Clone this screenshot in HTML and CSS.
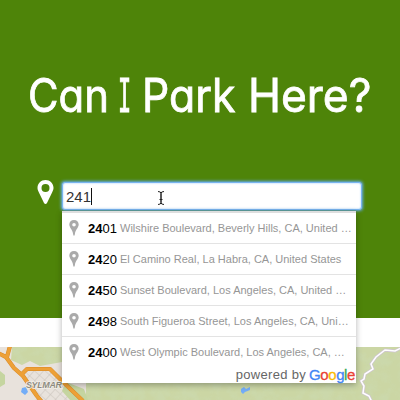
FILE: index.html
```html
<!DOCTYPE html>
<html lang="en">
<head>
<meta charset="utf-8">
<title>Can I Park Here?</title>
<link rel="stylesheet" href="styles.css">
</head>
<body>
<svg class="defs" width="0" height="0" aria-hidden="true">
  <symbol id="pin" viewBox="0 0 16 24">
    <path fill-rule="evenodd" d="M8 0C3.500 0 0 3.400 0 7.800c0 1.800.5 2.800 1.300 4.500L6.500 23q.6 1 1.500 1t1.500-1l5.200-10.700C15.500 10.600 16 9.600 16 7.800 16 3.400 12.500 0 8 0zM8 4a4 4 0 1 1 0 8 4 4 0 0 1 0-8z"/>
  </symbol>
  <symbol id="marker" viewBox="0 0 10 16">
    <path fill-rule="evenodd" d="M5 0C2.200 0 .3 2 .3 4.600c0 3 3.200 5 3.800 9.400.1.800.3 1.700.9 1.700s.8-.9.900-1.700C6.500 9.600 9.700 7.600 9.700 4.600 9.700 2 7.800 0 5 0zM5 3a1.800 1.800 0 1 1 0 3.600A1.800 1.800 0 0 1 5 3z"/>
  </symbol>
</svg>
<header class="hero">
  <h1 class="title"><span class="can">Can</span> <span class="i">I</span> <span class="park">Park</span> <span class="here">Here?</span></h1>
  <div class="search">
    <svg class="pin"><use href="#pin"/></svg>
    <div class="field"><span class="value">241</span><span class="caret"></span>
      <svg class="cursor" viewBox="0 0 8 16"><path d="M1 1.500q3 0 3 2v9q0 2-3 2M7 1.500q-3 0-3 2v9q0 2 3 2M2.500 9.500h3"/></svg>
      <div class="menu">
        <div class="row"><svg class="marker"><use href="#marker"/></svg><span class="num"><b>24</b>01</span><span class="place">Wilshire Boulevard, Beverly Hills, CA, United …</span></div>
        <div class="row"><svg class="marker"><use href="#marker"/></svg><span class="num"><b>24</b>20</span><span class="place">El Camino Real, La Habra, CA, United States</span></div>
        <div class="row"><svg class="marker"><use href="#marker"/></svg><span class="num"><b>24</b>50</span><span class="place">Sunset Boulevard, Los Angeles, CA, United …</span></div>
        <div class="row"><svg class="marker"><use href="#marker"/></svg><span class="num"><b>24</b>98</span><span class="place">South Figueroa Street, Los Angeles, CA, Uni…</span></div>
        <div class="row"><svg class="marker"><use href="#marker"/></svg><span class="num"><b>24</b>00</span><span class="place">West Olympic Boulevard, Los Angeles, CA, …</span></div>
        <div class="credit"><span>powered by</span><span class="google"><i class="blue">G</i><i class="red">o</i><i class="yellow">o</i><i class="blue">g</i><i class="green">l</i><i class="red">e</i></span></div>
      </div>
    </div>
  </div>
</header>
<svg class="map" viewBox="0 347 400 53">
  <defs>
    <filter id="relief" x="0" y="0" width="100%" height="100%">
      <feTurbulence type="fractalNoise" baseFrequency=".09" numOctaves="3" seed="8"/>
      <feColorMatrix values="0 0 0 0 .6  0 0 0 0 .7  0 0 0 0 .43  2.500 0 0 0 -.9"/>
    </filter>
    <pattern id="streets" width="7" height="7" patternUnits="userSpaceOnUse" patternTransform="rotate(42)">
      <path d="M0 0H7M0 0V7" stroke="#cbc5be" stroke-width="1.200"/>
    </pattern>
  </defs>
  <rect y="347" width="400" height="53" fill="#cbd6a4"/>
  <rect y="347" width="400" height="53" filter="url(#relief)" opacity=".65"/>
  <path fill="#e8e2dc" d="M0 347h12l-1 13 11 5 8-4 10 5 22-4 24 18v20H0z"/>
  <path fill="url(#streets)" d="M28 370l22-2 16 12 16 20H36L24 378z"/>
  <path fill="#c5d5a0" d="M0 371l5 4v9l-5 3zM66 382l18 7 4 11H70l-8-9z"/>
  <path fill="none" stroke="#d98925" stroke-width="4.200" stroke-linejoin="round" d="M-2 353l8 4 8 11 9 8 14 20 5 6M7 357l3-11M22 374l5-5h23l11 11 22 21"/>
  <path fill="none" stroke="#eda037" stroke-width="3.200" stroke-linejoin="round" d="M-2 353l8 4 8 11 9 8 14 20 5 6M7 357l3-11M22 374l5-5h23l11 11 22 21"/>
  <path fill="#73adf7" d="M22 388l4-1 2 5-3 3-4-3zM241 389l3-2 2 2 4-2v3l-5 2-2 2-2-2z"/>
  <path fill="none" stroke="#cfc4d4" stroke-width="2.800" d="M401 348l-6 3-10-1-9 7-5 7 2 5-8 5-1 5-3 2 3 5-1 7 6 3 4 8"/>
  <path fill="none" stroke="#fff" stroke-width="1.500" d="M401 348l-6 3-10-1-9 7-5 7 2 5-8 5-1 5-3 2 3 5-1 7 6 3 4 8"/>
  <text class="town" x="26" y="387.500" textLength="36">SYLMAR</text>
</svg>
</body>
</html>
```
FILE: styles.css
```css
* { box-sizing: border-box; }
body { margin: 0; width: 400px; height: 400px; overflow: hidden; background: #fff; font-family: "Liberation Sans", Arial, sans-serif; }
.defs { position: absolute; }
.hero { height: 318px; padding-top: 67px; background: #4e8409; }
.title { display: flex; height: 56px; margin: 0; padding-left: 28px; color: #fff; font: 400 46px/56px Inter, sans-serif; font-feature-settings: "cv11", "cv08"; -webkit-text-stroke: .8px #fff; stroke-linejoin: round; white-space: nowrap; }
.title span { flex: none; transform-origin: 0 50%; }
.can { width: 91px; transform: scaleX(.91); }
.i { width: 23px; transform: scaleX(.55); }
.park { width: 106px; transform: scaleX(.93); }
.here { width: 122px; transform: scaleX(.965); }
.search { display: flex; margin-top: 59px; padding-left: 37px; }
.pin { width: 17px; height: 24px; margin: -2px 8px 0 0; fill: #fff; }
.field { position: relative; display: flex; align-items: center; width: 300px; height: 28px; padding-left: 3px; background: #fff; border: 1px solid #78b4ef; border-radius: 3px; box-shadow: 0 0 3px 1px #67acef, inset 0 0 2px #8cc4fa; }
.value { color: #333; font-size: 15px; line-height: 28px; position: relative; top: 1px; }
.caret { width: 1px; height: 17px; background: #111; }
.cursor { position: absolute; left: 94px; top: 7px; width: 8px; height: 16px; fill: none; stroke: #222; stroke-width: 1; }
.menu { position: absolute; top: 28px; left: -1px; width: 294px; height: 172px; background: #fff; border-top: 2px solid #dedede; box-shadow: 0 2px 6px rgba(0,0,0,.3); }
.row { display: flex; align-items: center; height: 31px; padding-left: 7px; border-bottom: 1px solid #e3e3e3; white-space: nowrap; }
.row:nth-child(5) { border-color: transparent; }
.marker { width: 10px; height: 16px; margin-right: 9px; fill: #aaa; }
.num { width: 32px; color: #000; font-size: 13px; }
.place { color: #969696; font-size: 11px; }
.credit { display: flex; justify-content: flex-end; gap: 3px; height: 17px; margin-top: -2px; padding-right: 1px; color: #666; font-size: 13px; line-height: 17px; letter-spacing: .3px; }
.google { font-size: 15px; letter-spacing: -.4px; }
.google i { font-style: normal; -webkit-text-stroke: .3px; }
.blue { color: #4285f4; }
.red { color: #ea4335; }
.yellow { color: #fbbc05; }
.green { color: #34a853; }
.map { display: block; width: 400px; height: 53px; margin-top: 29px; }
.town { fill: #8e8b80; stroke: #f2efe8; stroke-width: 1.5px; paint-order: stroke; font: bold italic 9px "Liberation Sans", Arial, sans-serif; }
```
